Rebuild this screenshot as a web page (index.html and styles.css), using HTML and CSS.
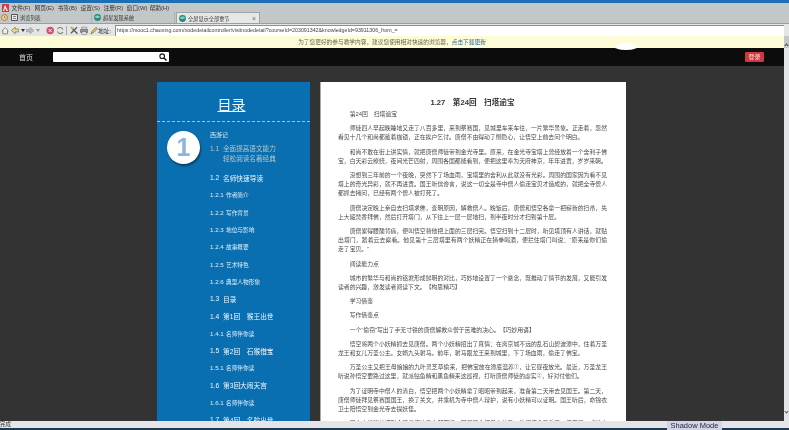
FILE: index.html
```html
<!DOCTYPE html>
<html lang="zh-CN">
<head>
  <meta charset="UTF-8" />
  <title>全屏显示全部章节</title>
  <link rel="stylesheet" href="styles.css">
</head>
<body>
  <div class="window">
    <div class="chrome">
      <div class="title-strip"></div>
      <ul class="menu">
        <li class="app-icon"><svg width="7" height="8" viewBox="0 0 7 8"><path d="M0 0h7v8H0z" fill="#d63a3f"/><path d="M1 7 3 1l3 6H4.600L3 4 2.200 7z" fill="#fff"/></svg></li>
        <li>文件(F)</li>
        <li>网页(E)</li>
        <li>书签(B)</li>
        <li>设置(S)</li>
        <li>注册(R)</li>
        <li>窗口(W)</li>
        <li>帮助(H)</li>
      </ul>
      <div class="tabs">
        <span class="tab-clock"><svg width="7" height="7" viewBox="0 0 7 7"><circle cx="3.500" cy="3.500" r="3" fill="#e8d9a0" stroke="#b5742c"/><path d="M3.500 1.800v1.900l1.200.6" fill="none" stroke="#8a4a1c" stroke-width=".7"/></svg></span>
        <div class="tab"><svg width="7" height="7" viewBox="0 0 7 7"><path d="M.5.5h6v6h-6z" fill="#e8e8e8" stroke="#555"/><path d="M2 2.500h3M2 4.500h3" stroke="#555" stroke-width=".7"/></svg>浏览列表</div>
        <div class="tab"><svg width="7" height="7" viewBox="0 0 7 7"><circle cx="3.500" cy="3.500" r="3.400" fill="#1c8c86"/><path d="M1 3c1-2 4-2 5 0-1 1-4 2-5 0z" fill="#8fd0a8"/></svg>超星发现系统</div>
        <div class="tab tab-active"><svg width="7" height="7" viewBox="0 0 7 7"><circle cx="3.500" cy="3.500" r="3.400" fill="#1c8c86"/><path d="M1 3c1-2 4-2 5 0-1 1-4 2-5 0z" fill="#8fd0a8"/></svg>全屏显示全部章节<span class="tab-close">×</span></div>
      </div>
      <div class="toolbar">
        <div class="tools">
          <svg width="9" height="9" viewBox="0 0 9 9"><path d="M1 5 4.500 1.500 8 5M2 4.500V8h5V4.500" fill="#f2f2e6" stroke="#666" stroke-width=".8"/></svg>
          <svg width="9" height="9" viewBox="0 0 9 9"><path d="M.5 4.500 4.500 1v2h4v3h-4v2z" fill="#e8dc8c" stroke="#6f6a3a" stroke-width=".7"/></svg>
          <span class="caret"></span>
          <svg width="9" height="9" viewBox="0 0 9 9"><path d="M8.500 4.500 4.500 1v2h-4v3h4v2z" fill="#b9bcc2" stroke="#9a9da3" stroke-width=".7"/></svg>
          <span class="caret caret-light"></span>
          <svg width="9" height="9" viewBox="0 0 9 9"><circle cx="4.500" cy="4.500" r="4" fill="#d4506a"/><path d="M3 3l3 3M6 3 3 6" stroke="#fff"/></svg>
          <svg width="9" height="9" viewBox="0 0 9 9"><path d="M7.500 3.500A3.200 3.200 0 0 0 1.600 3M1.500 5.500A3.200 3.200 0 0 0 7.400 6" fill="none" stroke="#777" stroke-width="1.100"/></svg>
          <span class="divider"></span>
          <svg width="9" height="9" viewBox="0 0 9 9"><path d="M1 1l7 7M7.500 1 1 7.500" stroke="#555" stroke-width="1.300"/><path d="M1 1h3v2H1z" fill="#d8b552"/></svg>
          <svg width="9" height="9" viewBox="0 0 9 9"><path d="M2 1h5v2H2z" fill="#fff" stroke="#555" stroke-width=".6"/><path d="M.5 3.500h8v3h-8z" fill="#999" stroke="#555" stroke-width=".6"/><path d="M2 6h5v2.500H2z" fill="#fff" stroke="#555" stroke-width=".6"/></svg>
          <svg width="9" height="9" viewBox="0 0 9 9"><path d="M1 8 2 5.500 6.500 1 8 2.500 3.500 7z" fill="#d9c36a" stroke="#6a6238" stroke-width=".7"/></svg>
        </div>
        <span class="address-label">地址:</span>
        <div class="address">https://mooc1.chaoxing.com/nodedetailcontroller/visitnodedetail?courseId=203091342&amp;knowledgeId=93911306_from_=</div>
      </div>
      <div class="notice">为了您更好的参与教学内容，建议您使用相对快速的浏览器，<a class="notice-link">点击下载更新</a></div>
    </div>

    <div class="viewport">
      <div class="site">
        <nav class="navbar">
          <a class="nav-home">首页</a>
          <div class="search">
            <svg width="8" height="8" viewBox="0 0 8 8"><circle cx="3.200" cy="3.200" r="2.300" fill="none" stroke="#111" stroke-width="1.100"/><path d="M5 5l2.500 2.500" stroke="#111" stroke-width="1.400"/></svg>
          </div>
          <a class="login">登录</a>
        </nav>

        <main class="reader">
          <aside class="catalog">
            <h1 class="catalog-title"><span>目录</span></h1>
            <div class="catalog-body">
              <div class="badge-col"><div class="badge">1</div></div>
              <ul class="toc">
                <li class="toc-book">西游记</li>
                <li class="toc-current"><span class="num">1.1</span><span>全面提高语文能力<br>轻松阅读名著经典</span></li>
                <li class="toc-2"><span class="num">1.2</span>名师快速导读</li>
                <li class="toc-3"><span class="num">1.2.1</span>作者简介</li>
                <li class="toc-3"><span class="num">1.2.2</span>写作背景</li>
                <li class="toc-3"><span class="num">1.2.3</span>地位与影响</li>
                <li class="toc-3"><span class="num">1.2.4</span>故事概要</li>
                <li class="toc-3"><span class="num">1.2.5</span>艺术特色</li>
                <li class="toc-3"><span class="num">1.2.6</span>典型人物形象</li>
                <li class="toc-2"><span class="num">1.3</span>目录</li>
                <li class="toc-2"><span class="num">1.4</span>第1回　猴王出世</li>
                <li class="toc-3"><span class="num">1.4.1</span>名师伴你读</li>
                <li class="toc-2"><span class="num">1.5</span>第2回　石猴借宝</li>
                <li class="toc-3"><span class="num">1.5.1</span>名师伴你读</li>
                <li class="toc-2"><span class="num">1.6</span>第3回大闹天宫</li>
                <li class="toc-3"><span class="num">1.6.1</span>名师伴你读</li>
                <li class="toc-2"><span class="num">1.7</span>第4回　名驼出世</li>
              </ul>
            </div>
          </aside>

          <article class="paper">
            <h2 class="chapter">1.27　第24回　扫塔逾宝</h2>
            <p class="first">第24回　扫塔逾宝</p>
            <p>师徒四人早起晚睡地又走了八百多里，来到祭赛国，见城里车来车往，一片繁华景象。正走着，忽然看见十几个和尚都戴着枷锁，正在挨户乞讨。唐僧不由得动了恻隐心，让悟空上前去问个明白。</p>
            <p>和尚不敢在街上讲实情，就把唐僧师徒带到金光寺里。原来，在金光寺宝塔上曾经放着一个舍利子佛宝，白天彩云缭绕，夜间光芒四射，周围各国都能看到，便把这里奉为天府神京，年年进贡，岁岁来朝。</p>
            <p>没想到三年前的一个夜晚，突然下了场血雨，宝塔里的舍利从此就没有光彩。周围的国家因为看不见塔上的奇光异彩，就不再进贡。国王听信谗言，说这一切全是寺中僧人偷走宝贝才造成的，就把全寺僧人都抓去拷问，已经有两个僧人被打死了。</p>
            <p>唐僧决定晚上亲自去扫塔求佛，查明原因，解救僧人。晚饭后，唐僧和悟空各拿一把崭新的扫帚，先上大殿焚香拜佛，然后打开塔门，从下往上一层一层地扫，到半夜时分才扫到第十层。</p>
            <p>唐僧累得腰酸背痛，便叫悟空替他把上面的三层扫完。悟空扫到十二层时，听见塔顶有人讲话，就贴出塔门，踏着云去察看。他见第十三层塔里有两个妖精正在猜拳喝酒，便拦住塔门叫说：“原来是你们偷走了宝贝。”</p>
            <p>阅读能力点</p>
            <p>城市的繁华与和尚的铭窘形成鲜明的对比，巧妙地设置了一个悬念，既推动了情节的发展，又能引发读者的兴趣，激发读者阅读下文。【构思精巧】</p>
            <p>学习借鉴</p>
            <p>写作借鉴点</p>
            <p>一个“偷窃”写出了手无寸铁的唐僧解救众僧于苦难的决心。【巧妙用语】</p>
            <p>悟空将两个小妖精抓去见唐僧。两个小妖精招出了真情：在离京城不远的乱石山碧波潭中，住着万圣龙王和女儿万圣公主。女婿九头驸马。前年，驸马跟龙王来到城里，下了场血雨，偷走了佛宝。</p>
            <p>万圣公主又把王母娘娘的九叶灵芝草偷来，把佛宝放在潭底温养<sup>①</sup>，让它昼夜放光。最近，万圣龙王听说孙悟空要路过这里，就派鲇鱼精和黑鱼精来这巡视，打听唐僧师徒的虚实<sup>②</sup>，好对付他们。</p>
            <p>为了证明寺中僧人的清白，悟空把两个小妖精拿了昭昭带到起来，准备第二天带去见国王。第二天，唐僧师徒拜见祭赛国国王，换了关文，并乘机为寺中僧人辩护，说有小妖精可以证明。国王听后，命锦衣卫士陪悟空到金光寺去提妖怪。</p>
            <p>两个小妖精被押到金殿后招认了全部罪行，国王下令把僧人放了。他们便拿了兵刃，悟空和八戒前去潭底。</p>
          </article>
        </main>
      </div>
      <div class="scrollbar">
        <span class="scroll-arrow"></span>
      </div>
    </div>

    <footer class="statusbar">完成</footer>
  </div>

  <span class="scroll-up"></span>
  <div class="glare"></div>
  <div class="shadow-mode">Shadow Mode</div>
</body>
</html>
```

FILE: styles.css
```css
* { box-sizing: border-box; margin: 0; padding: 0; }

html, body {
  height: 430px;
  overflow: hidden;
  background: #333;
}

body {
  position: relative;
  font-family: "Liberation Sans", "Noto Sans CJK SC", sans-serif;
  filter: blur(0.4px);
}

.window {
  display: flex;
  flex-direction: column;
  height: 430px;
}

/* browser chrome */
.chrome {
  flex: none;
  background: #c3c7c7;
  color: #333;
  font-size: 5.800px;
}

.title-strip {
  height: 3px;
  background: #1c6fb6;
}

.menu {
  display: flex;
  align-items: center;
  gap: 5.500px;
  height: 9px;
  padding-left: 2px;
  list-style: none;
  white-space: nowrap;
}

.menu li { width: 17.500px; }
.menu .app-icon { width: 7px; margin-right: -3px; display: flex; }

.tabs {
  display: flex;
  align-items: stretch;
  height: 11px;
  font-size: 5.200px;
}

.tab-clock {
  width: 10px;
  display: flex;
  align-items: center;
  padding-left: 1px;
}

.tab {
  width: 82px;
  margin-right: 1px;
  display: flex;
  align-items: center;
  gap: 2px;
  padding-left: 1px;
  border-right: 1px solid #aeb2b2;
  white-space: nowrap;
}

.tab-active {
  width: 84px;
  background: #e6e8e7;
  border: 1px solid #a0a4a4;
  border-bottom: 0;
  padding-left: 2px;
}

.tab-close {
  margin-left: auto;
  margin-right: 3px;
  color: #666;
  font-size: 7px;
}

.toolbar {
  display: flex;
  align-items: center;
  height: 13px;
  background: #e4e6e6;
  border-top: 1px solid #9a9e9e;
}

.tools {
  display: flex;
  align-items: center;
  gap: 1.500px;
  width: 98px;
  padding-left: 1px;
}

.caret {
  width: 0;
  height: 0;
  border: 2px solid transparent;
  border-top: 3px solid #333;
  border-bottom: 0;
}

.caret-light { border-top-color: #999; margin-right: 4px; }

.divider {
  width: 1px;
  height: 9px;
  margin: 0 1px;
  background: #aaa;
}

.address-label {
  width: 17px;
  font-size: 5.800px;
}

.address {
  flex: 1;
  height: 11px;
  margin-right: 5px;
  padding-left: 1px;
  background: #fff;
  border-top: 1px solid #8a8e90;
  border-left: 1px solid #8a8e90;
  color: #444;
  font-size: 5.300px;
  line-height: 9px;
  white-space: nowrap;
  overflow: hidden;
}

.notice {
  height: 12px;
  margin-right: 5px;
  background: #fdfcd6;
  color: #66654a;
  font-size: 5.700px;
  line-height: 12px;
  text-align: center;
}

.notice-link { color: #2a5f9e; }

.viewport {
  flex: 1;
  min-height: 0;
  display: flex;
}

.site {
  flex: 1;
  min-width: 0;
  display: flex;
  flex-direction: column;
  background: #333;
}

.scrollbar {
  flex: none;
  width: 5px;
  position: relative;
  background: #e4e5e8;
}

.scroll-arrow {
  position: absolute;
  left: 1px;
  bottom: 8px;
  width: 3px;
  height: 3px;
  border-right: 1px solid #555;
  border-bottom: 1px solid #555;
  transform: rotate(45deg);
}

.scroll-up {
  position: absolute;
  left: 785px;
  top: 44px;
  width: 3px;
  height: 3px;
  border-left: 1px solid #444;
  border-top: 1px solid #444;
  transform: rotate(45deg);
}

/* site nav */
.navbar {
  flex: none;
  height: 18px;
  display: flex;
  align-items: center;
  padding: 0 20px 0 19px;
  background: #0d0c0d;
}

.nav-home {
  width: 34px;
  color: #ddd;
  font-size: 7px;
}

.search {
  width: 116px;
  height: 10px;
  display: flex;
  align-items: center;
  justify-content: flex-end;
  padding-right: 2px;
  background: #fff;
  border-radius: 1px;
}

.login {
  width: 19px;
  height: 10px;
  margin-left: auto;
  background: #d0363f;
  border-radius: 1px;
  color: #fbdcdc;
  font-size: 6px;
  line-height: 10px;
  text-align: center;
}

/* reader */
.reader {
  flex: 1;
  min-height: 0;
  display: flex;
  justify-content: center;
  gap: 10px;
  padding: 16px 1px 0 0;
  overflow: hidden;
}

.catalog {
  flex: none;
  width: 153px;
  background: #0a6fb0;
  color: #eef6fc;
}

.catalog-title {
  height: 40px;
  padding: 12px 4px 0 0;
  border-bottom: 1px dashed #8fc8ee;
  font-size: 14px;
  font-weight: 400;
  line-height: 22px;
  text-align: center;
}

.catalog-title span { text-decoration: underline; text-decoration-thickness: 1px; }

.catalog-body { display: flex; }

.badge-col {
  flex: none;
  width: 53px;
  padding: 9px 0 0 10px;
}

.badge {
  width: 33px;
  height: 33px;
  border-radius: 50%;
  background: #fff;
  box-shadow: 1px 2px 2px #0a3f66;
  color: #8fb4dc;
  font-size: 25px;
  font-weight: 700;
  line-height: 33px;
  text-align: center;
}

.toc {
  list-style: none;
  padding-top: 9px;
  white-space: nowrap;
}

.toc-book {
  height: 9px;
  color: #cfe4f4;
  font-size: 6px;
  line-height: 9px;
}

.toc-current {
  display: flex;
  margin: 4px 0 5px;
  color: #b7c4c0;
  font-size: 6.600px;
  line-height: 10px;
}

.toc-current .num { width: 13px; }

.toc-2, .toc-3 {
  display: flex;
  align-items: center;
  height: 17.300px;
}

.toc-2 { font-size: 6.700px; }
.toc-2 .num { width: 13px; }
.toc-3 { font-size: 5.700px; color: #dcedf9; }
.toc-3 .num { width: 16px; font-size: 6.200px; }

.paper {
  flex: none;
  width: 306px;
  padding: 15px 19px 0 17px;
  background: #fff;
  border-left: 1px solid #aaa;
  color: #4a4a4a;
  font-size: 5.850px;
  line-height: 9.200px;
}

.chapter {
  margin-bottom: 1px;
  color: #333;
  font-size: 7.600px;
  line-height: 12px;
  font-weight: 700;
  text-align: center;
}

.paper p {
  margin-bottom: 5px;
  text-align: justify;
  text-indent: 2em;
}

.paper sup {
  font-size: 5px;
  line-height: 0;
  vertical-align: 1.500px;
}

.statusbar {
  flex: none;
  height: 9px;
  background: #e4e4e9;
  border-bottom: 2px solid #1d3a50;
  color: #333;
  font-size: 5.500px;
  line-height: 7px;
}

/* things sitting on top of the page */
.glare {
  position: absolute;
  left: 613px;
  top: 42px;
  width: 26px;
  height: 8px;
  border-radius: 50%;
  background: radial-gradient(ellipse at 50% 70%, #fff 45%, rgba(255,255,255,0) 72%);
}

.shadow-mode {
  position: absolute;
  left: 667px;
  top: 421px;
  width: 55px;
  height: 9px;
  background: #d3d3e6;
  color: #222a44;
  font-size: 7.500px;
  line-height: 9px;
  text-align: center;
  white-space: nowrap;
}
```
